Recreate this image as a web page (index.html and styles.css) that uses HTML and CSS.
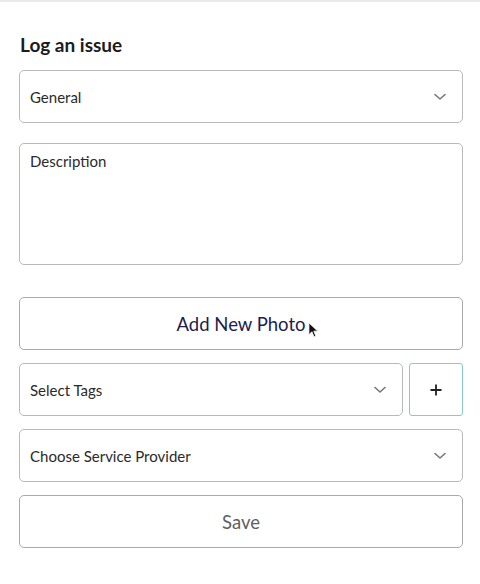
FILE: index.html
```html
<!DOCTYPE html>
<html>
<head>
<meta charset="utf-8">
<link rel="stylesheet" href="styles.css">
</head>
<body>
<div class="page">
  <h1 class="title">Log an issue</h1>
  <div class="field select">
    <span>General</span>
    <svg class="chev" viewBox="0 0 12 8" width="12" height="8"><path d="M1 1.5 L6 6 L11 1.5" fill="none" stroke="#777" stroke-width="1.6" stroke-linecap="round" stroke-linejoin="round"/></svg>
  </div>
  <div class="field textarea"><span>Description</span></div>
  <div class="btn photo">Add New Photo
    <svg class="cursor" viewBox="0 0 14 20" width="12" height="17"><path d="M1 1 L1 15 L4.5 11.5 L7 17.5 L9.2 16.5 L6.8 10.8 L11.5 10.8 Z" fill="#111" stroke="#fff" stroke-width="1"/></svg>
  </div>
  <div class="row">
    <div class="field select grow">
      <span>Select Tags</span>
      <svg class="chev" viewBox="0 0 12 8" width="12" height="8"><path d="M1 1.5 L6 6 L11 1.5" fill="none" stroke="#777" stroke-width="1.6" stroke-linecap="round" stroke-linejoin="round"/></svg>
    </div>
    <div class="plus">
      <svg viewBox="0 0 12 12" width="12" height="12"><path d="M6 0.5 V11.5 M0.5 6 H11.5" stroke="#222" stroke-width="1.8"/></svg>
    </div>
  </div>
  <div class="field select">
    <span>Choose Service Provider</span>
    <svg class="chev" viewBox="0 0 12 8" width="12" height="8"><path d="M1 1.5 L6 6 L11 1.5" fill="none" stroke="#777" stroke-width="1.6" stroke-linecap="round" stroke-linejoin="round"/></svg>
  </div>
  <div class="btn save">Save</div>
</div>
</body>
</html>
```
FILE: styles.css
```css
html, body {
  margin: 0;
  padding: 0;
  background: #fff;
}
body {
  font-family: Lato, "Noto Sans", sans-serif;
  color: #2a2a2a;
  border-top: 2px solid #e9e9ec;
}
.page {
  padding: 32px 17px 0 19px;
  display: flex;
  flex-direction: column;
}
.title {
  margin: 0 0 0 1px;
  font-size: 19px;
  line-height: 22px;
  font-weight: 700;
  color: #1c1c1c;
}
.field {
  box-sizing: border-box;
  border: 1px solid #b9b9b9;
  border-radius: 5px;
  font-size: 15px;
  color: #2a2a2a;
}
.select {
  height: 53px;
  display: flex;
  align-items: center;
  justify-content: space-between;
  padding: 0 16px 0 10px;
  margin-top: 14px;
}
.textarea {
  height: 122px;
  margin-top: 20px;
  padding: 8px 10px;
}
.btn {
  box-sizing: border-box;
  height: 53px;
  border: 1px solid #a9a9a9;
  border-radius: 5px;
  display: flex;
  align-items: center;
  justify-content: center;
  font-size: 18.5px;
  position: relative;
}
.photo {
  margin-top: 32px;
  color: #1e1d4c;
}
.cursor {
  position: absolute;
  left: 288px;
  top: 24px;
}
.save {
  margin-top: 13px;
  color: #5f5f5f;
}
.row {
  display: flex;
  gap: 6px;
  margin-top: 13px;
}
.row .select {
  margin-top: 0;
}
.grow {
  flex: 1;
}
.plus {
  box-sizing: border-box;
  width: 54px;
  height: 53px;
  border: 1px solid #86cbc6;
  border-radius: 3px;
  display: flex;
  align-items: center;
  justify-content: center;
}
.row + .select {
  margin-top: 13px;
}
```
